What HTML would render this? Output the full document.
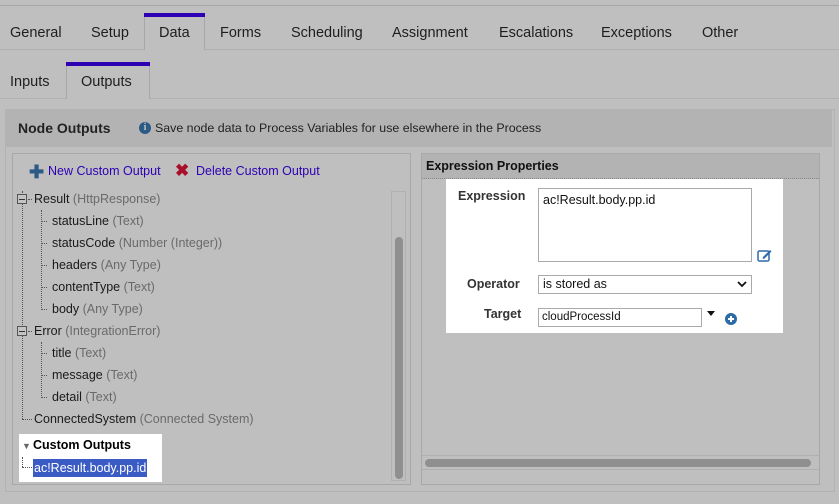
<!DOCTYPE html>
<html><head><style>
*{box-sizing:border-box;margin:0;padding:0}
body{width:839px;height:504px;background:#bfbfbf;font-family:"Liberation Sans",sans-serif;color:#1c1c1c;position:relative;overflow:hidden}
.a{position:absolute}
.tab{position:absolute;top:25px;font-size:14.5px;color:#1e1e1e}
.t{position:absolute;font-size:12.5px;color:#1a1a1a;white-space:nowrap}
.t span{color:#6a6a6a}
.dv{position:absolute;border-left:1px dotted #555}
.dh{position:absolute;border-top:1px dotted #555;width:6px}
.box{position:absolute;width:10px;height:10px;border:1px solid #555;background:#c4c4c4}
.box:after{content:"";position:absolute;left:1px;top:3.5px;width:6px;height:1px;background:#333}
</style></head><body>
<div class="a" style="left:0;top:5px;width:839px;height:1px;background:#a8a8a8"></div>
<div class="a" style="left:0;top:49px;width:839px;height:1px;background:#b0b0b0"></div>
<div class="a" style="left:144px;top:13px;width:61px;height:37px;border-left:1px solid #a8a8a8;border-right:1px solid #a8a8a8;background:#bfbfbf"></div>
<div class="a" style="left:144px;top:13px;width:61px;height:4px;background:#2d00b4"></div>
<div class="tab" style="left:10px">General</div>
<div class="tab" style="left:91px">Setup</div>
<div class="tab" style="left:159px">Data</div>
<div class="tab" style="left:220px">Forms</div>
<div class="tab" style="left:291px">Scheduling</div>
<div class="tab" style="left:392px">Assignment</div>
<div class="tab" style="left:499px">Escalations</div>
<div class="tab" style="left:601px">Exceptions</div>
<div class="tab" style="left:702px">Other</div>
<div class="a" style="left:0;top:98px;width:839px;height:1px;background:#b0b0b0"></div>
<div class="a" style="left:66px;top:62px;width:84px;height:37px;border-left:1px solid #a8a8a8;border-right:1px solid #a8a8a8;background:#bfbfbf"></div>
<div class="a" style="left:66px;top:62px;width:84px;height:4px;background:#2d00b4"></div>
<div class="tab" style="left:10px;top:74px">Inputs</div>
<div class="tab" style="left:81px;top:74px">Outputs</div>
<div class="a" style="left:5px;top:109px;width:830px;height:383px;border:1px solid #b2b2b2"></div>
<div class="a" style="left:6px;top:110px;width:826px;height:37px;background:#b3b3b3"></div>
<div class="a" style="left:18px;top:120px;font-size:14px;font-weight:bold;color:#222">Node Outputs</div>
<div class="a" style="left:139px;top:122px;width:12px;height:12px;border-radius:50%;background:#2c5a86;color:#c0c0c0;font-size:10px;font-weight:bold;text-align:center;line-height:12px;font-family:'Liberation Serif',serif">i</div>
<div class="a" style="left:155px;top:121px;font-size:12.4px;color:#222">Save node data to Process Variables for use elsewhere in the Process</div>
<div class="a" style="left:12px;top:153px;width:399px;height:332px;border:1px solid #a8a8a8"></div>
<div class="a" style="left:29px;top:163px;font-size:18px;font-weight:bold;color:#2c5a86;line-height:18px">✚</div>
<div class="a" style="left:48px;top:164px;font-size:12.5px;color:#2d00b4">New Custom Output</div>
<div class="a" style="left:175px;top:162px;font-size:17px;font-weight:bold;color:#a8102a;line-height:18px">✖</div>
<div class="a" style="left:196px;top:164px;font-size:12.5px;color:#2d00b4">Delete Custom Output</div>
<div class="a" style="left:391px;top:191px;width:15px;height:290px;border:1px solid #b0b0b0"></div>
<div class="a" style="left:395px;top:237px;width:8px;height:242px;border-radius:4px;background:#8f8f8f"></div>
<div class="dv" style="left:22px;top:191px;height:228px"></div>
<div class="dv" style="left:41px;top:210px;height:100px"></div>
<div class="dv" style="left:41px;top:342px;height:56px"></div>
<div class="box" style="left:17px;top:194px"></div>
<div class="box" style="left:17px;top:326px"></div>
<div class="dh" style="left:28px;top:199px;width:4px"></div>
<div class="dh" style="left:28px;top:331px;width:4px"></div>
<div class="dh" style="left:22px;top:419px;width:10px"></div>
<div class="dh" style="left:41px;top:221px"></div>
<div class="dh" style="left:41px;top:243px"></div>
<div class="dh" style="left:41px;top:265px"></div>
<div class="dh" style="left:41px;top:287px"></div>
<div class="dh" style="left:41px;top:309px"></div>
<div class="dh" style="left:41px;top:353px"></div>
<div class="dh" style="left:41px;top:375px"></div>
<div class="dh" style="left:41px;top:397px"></div>
<div class="t" style="left:34px;top:192px">Result <span>(HttpResponse)</span></div>
<div class="t" style="left:52px;top:214px">statusLine <span>(Text)</span></div>
<div class="t" style="left:52px;top:236px">statusCode <span>(Number (Integer))</span></div>
<div class="t" style="left:52px;top:258px">headers <span>(Any Type)</span></div>
<div class="t" style="left:52px;top:280px">contentType <span>(Text)</span></div>
<div class="t" style="left:52px;top:302px">body <span>(Any Type)</span></div>
<div class="t" style="left:34px;top:324px">Error <span>(IntegrationError)</span></div>
<div class="t" style="left:52px;top:346px">title <span>(Text)</span></div>
<div class="t" style="left:52px;top:368px">message <span>(Text)</span></div>
<div class="t" style="left:52px;top:390px">detail <span>(Text)</span></div>
<div class="t" style="left:34px;top:412px">ConnectedSystem <span>(Connected System)</span></div>
<div class="a" style="left:19px;top:434px;width:143px;height:48px;background:#fff"></div>
<div class="a" style="left:22px;top:441px;font-size:9px;color:#666">▼</div>
<div class="t" style="left:33px;top:438px;font-weight:bold;color:#000">Custom Outputs</div>
<div class="dv" style="left:22px;top:457px;height:10px"></div>
<div class="dh" style="left:22px;top:467px;width:10px"></div>
<div class="t" style="left:33px;top:459px;background:#3b5bc4;color:#fff;padding:0 1px;height:18px;line-height:18px">ac!Result.body.pp.id</div>
<div class="a" style="left:421px;top:153px;width:399px;height:332px;border:1px solid #a8a8a8"></div>
<div class="a" style="left:422px;top:154px;width:397px;height:25px;background:#b3b3b3;border-bottom:1px dotted #888"></div>
<div class="a" style="left:426px;top:159px;font-size:12.5px;font-weight:bold;color:#111">Expression Properties</div>
<div class="a" style="left:446px;top:179px;width:337px;height:154px;background:#fff"></div>
<div class="a" style="left:458px;top:189px;font-size:12.5px;font-weight:bold;color:#333">Expression</div>
<div class="a" style="left:538px;top:188px;width:214px;height:74px;border:1px solid #aaa;padding:4px 4px;font-size:12.5px;color:#111">ac!Result.body.pp.id</div>
<svg class="a" style="left:757px;top:249px" width="15" height="13" viewBox="0 0 15 13"><rect x="1" y="2" width="11" height="10" rx="1.5" fill="none" stroke="#2c6aa8" stroke-width="1.5"/><path d="M6 8 L13 1 L14.5 2.5 L7.5 9.5 L5.5 10 Z" fill="#2c6aa8"/></svg>
<div class="a" style="left:467px;top:277px;font-size:12.5px;font-weight:bold;color:#333">Operator</div>
<div class="a" style="left:538px;top:275px;width:214px;height:19px;border:1px solid #aaa;padding:1px 4px;font-size:12.5px;color:#111">is stored as</div>
<svg class="a" style="left:737px;top:280px" width="10" height="8" viewBox="0 0 10 8"><path d="M1 2 L5 6 L9 2" fill="none" stroke="#111" stroke-width="1.8"/></svg>
<div class="a" style="left:484px;top:307px;font-size:12.5px;font-weight:bold;color:#333">Target</div>
<div class="a" style="left:538px;top:308px;width:164px;height:19px;border:1px solid #aaa;padding:2px 3px;font-size:11.5px;color:#111">cloudProcessId</div>
<div class="a" style="left:707px;top:311px;width:0;height:0;border-left:4px solid transparent;border-right:4px solid transparent;border-top:5px solid #111"></div>
<div class="a" style="left:725px;top:313px;width:12px;height:12px;border-radius:50%;background:#2c6aa8"></div>
<div class="a" style="left:728px;top:318px;width:6px;height:2px;background:#fff"></div>
<div class="a" style="left:730px;top:316px;width:2px;height:6px;background:#fff"></div>
<div class="a" style="left:422px;top:455px;width:397px;height:15px;border-top:1px solid #b0b0b0;border-bottom:1px solid #b0b0b0"></div>
<div class="a" style="left:425px;top:459px;width:386px;height:8px;border-radius:4px;background:#8f8f8f"></div>
</body></html>
